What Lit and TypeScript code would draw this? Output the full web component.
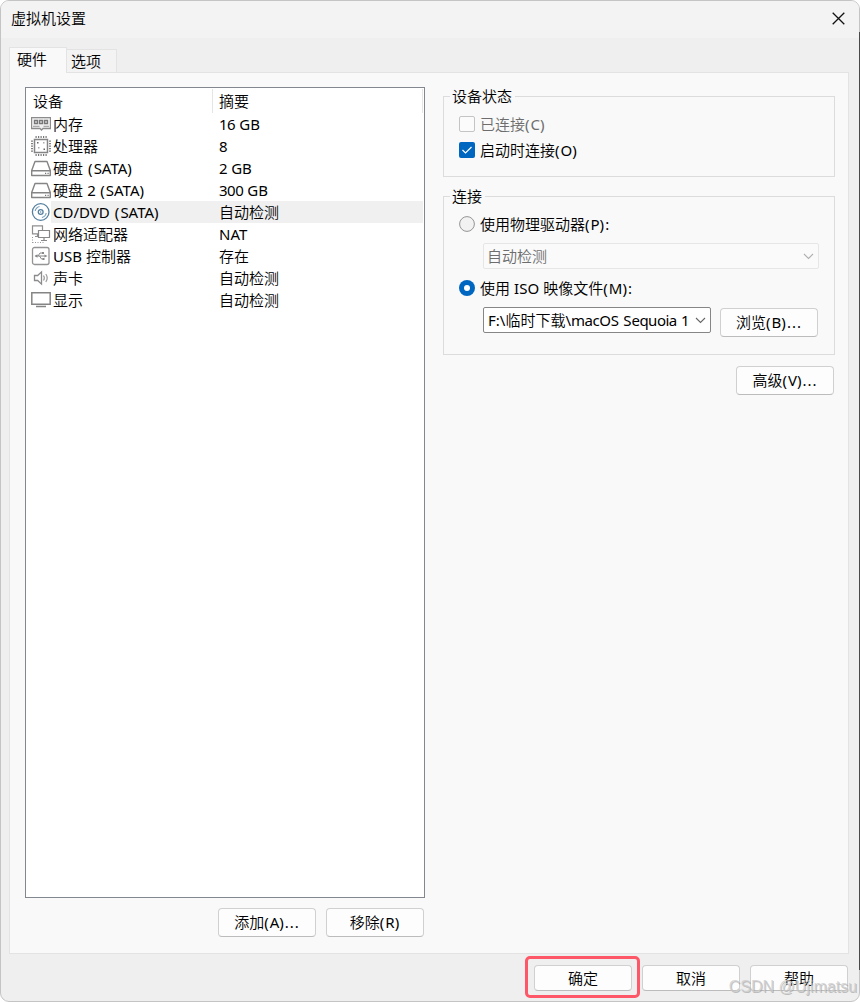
import { LitElement, html, css, svg } from "lit";
import { customElement, property } from "lit/decorators.js";

const ICONS: Record<string, unknown> = {
  memory: svg`<path d="M.5 3.700H19.500V14.500H12L10.500 16 9 14.500H.5z" stroke="#8c8c8c" fill="#f0f0f0" stroke-width="1.300"/><path d="M3.500 6.500h3v3h-3zM8.500 6.500h3v3h-3zM13.500 6.500h3v3h-3z" stroke="#777" fill="#ddd" stroke-width="1.300"/><path d="M2 12.300h6.500M12.500 12.300H18" stroke="#999"/>`,
  cpu: svg`<path d="M3.500 3.500h13v13h-13z" stroke="#858585" fill="#fff" stroke-width="1.500"/><path d="M4.500 1h12M4.500 19h12" stroke="#777" stroke-width="2" stroke-dasharray="1.200 1.300"/><path d="M1 4.500v12M19 4.500v12" stroke="#808080" stroke-width="2" stroke-dasharray="1.200 1.300"/><path d="M6 6h1.500v1.500H6zM12.500 12.500H14V14h-1.500z" fill="#666"/><path d="M7 11h1.500v1.500H7zM12 6h1.500v1.500H12z" fill="#aaa"/>`,
  disk: svg`<path d="M4 3.500h12L19.300 12.500v5H.7v-5zM.7 12.800h18.600" stroke="#858585" fill="#fff" stroke-width="1.400" stroke-linejoin="round"/><path d="M14 15.300h1.200M16.500 15.300h1.200" stroke="#777" stroke-width="1.200"/>`,
  cd: svg`<circle cx="9.700" cy="10" r="8.300" stroke="#55809f" fill="#fff" stroke-width="1.300"/><circle cx="9.700" cy="10" r="2.400" stroke="#55809f" fill="#fff" stroke-width="1.300"/><circle cx="9.700" cy="10" r=".7" fill="#55809f"/><path d="M4.200 9A5.800 5.800 0 0 1 8.500 4.500M15.200 11A5.800 5.800 0 0 1 10.900 15.500" stroke="#78a0bd" stroke-width="1.200" fill="none"/>`,
  net: svg`<path d="M1.500 1.800h10v8h-10zM6.500 10v2.500M4 12.500h4" stroke="#8f8f8f" fill="#fff" stroke-width="1.200"/><path d="M7.500 6.500h11v7h-11zM13 14v2.500M10 16.500h6" stroke="#888" fill="#fff" stroke-width="1.200"/><path d="M1.500 13v6M1.500 18.500H13" stroke="#999" stroke-dasharray="1 1.500" fill="none"/>`,
  usb: svg`<rect x="1.500" y="1.500" width="16.500" height="17" rx="2" stroke="#949494" fill="#fff" stroke-width="1.300"/><path d="M4.500 10h10M7 10l2-3h2.500M8.500 10l2 3h2" stroke="#888" fill="none"/><path d="M3.500 10l3-1.800v3.600zM13.500 8.500l3 1.500-3 1.500zM11 6h2v2h-2zM11.500 12H13.500v2h-2z" fill="#888"/>`,
  sound: svg`<path d="M3.500 7.500h3.200l3.800-3.600v12.200L6.700 12.500H3.500z" stroke="#8b8b8b" fill="#fff" stroke-width="1.300"/><path d="M12.500 7.500q1.700 2.500 0 5M14.800 6q2.800 4 0 8" stroke="#999" fill="none" stroke-width="1.200"/>`,
  display: svg`<path d="M.8 2.800h18.400v11.400H.8z" stroke="#858585" fill="#fff" stroke-width="1.500"/><path d="M5 16.500h10" stroke="#858585" stroke-width="1.500"/>`,
};

const ROWS = [
  { icon: "memory", name: "内存", value: "16 GB" },
  { icon: "cpu", name: "处理器", value: "8" },
  { icon: "disk", name: "硬盘 (SATA)", value: "2 GB" },
  { icon: "disk", name: "硬盘 2 (SATA)", value: "300 GB" },
  { icon: "cd", name: "CD/DVD (SATA)", value: "自动检测", selected: true },
  { icon: "net", name: "网络适配器", value: "NAT" },
  { icon: "usb", name: "USB 控制器", value: "存在" },
  { icon: "sound", name: "声卡", value: "自动检测" },
  { icon: "display", name: "显示", value: "自动检测" },
];

/** Splits a label so that parentheses, small letters and other Latin runs carry their own spacing. */
const label = (text: string) =>
  (text.match(/ ?[()]|\.+|[a-z0-9]+|[\x20-\x27\x2a-\x2d\x2f\x3a-\x60]+?(?= \()|[\x20-\x27\x2a-\x2d\x2f\x3a-\x60]+|[^\x20-\x7e]+/g) ?? []).map(
    (part) => {
      if (/^( ?[()]|\.)/.test(part)) return html`<span class="latin paren">${part}</span>`;
      if (/^[a-z0-9]/.test(part)) return html`<span class="latin narrow">${part}</span>`;
      if (/^[\x20-\x7e]/.test(part)) return html`<span class="latin">${part}</span>`;
      return part;
    }
  );

const textStyles = css`
  .latin {
    font-family: "Noto Sans", sans-serif;
    font-weight: 400;
    font-size: 15px;
    line-height: 1;
    word-spacing: 0.2px;
    white-space: pre;
  }
  .paren {
    letter-spacing: 1px;
  }
  .narrow {
    letter-spacing: -0.5px;
  }
`;

@customElement("push-button")
class PushButton extends LitElement {
  @property() text = "";
  static styles = [
    textStyles,
    css`
      :host {
        display: flex;
        box-sizing: border-box;
        width: 98px;
        height: 29px;
        border: 1px solid #d0d0d0;
        border-bottom-color: #bcbcbc;
        border-radius: 4px;
        background: #fdfdfd;
        align-items: center;
        justify-content: center;
        white-space: nowrap;
        line-height: 20px;
      }
      .caption {
        margin-bottom: 1px;
      }
    `,
  ];
  render() {
    return html`<span class="caption">${label(this.text)}</span>`;
  }
}

@customElement("device-list")
class DeviceList extends LitElement {
  static styles = [
    textStyles,
    css`
      :host {
        display: block;
        box-sizing: border-box;
        width: 400px;
        height: 811px;
        border: 1px solid #828790;
        background: #fff;
      }
      .head {
        display: flex;
        height: 24px;
        margin: 1px 1px 0 0;
        line-height: 23px;
      }
      .head div {
        box-sizing: border-box;
        border-right: 1px solid #e5e5e5;
      }
      .c1 {
        width: 187px;
        padding-left: 7px;
      }
      .c2 {
        width: 210px;
        padding-left: 6px;
      }
      .row {
        display: flex;
        height: 22px;
        line-height: 21px;
        padding-left: 5px;
        margin-right: 1px;
        white-space: nowrap;
      }
      .row svg {
        width: 20px;
        height: 20px;
        margin-top: 1px;
      }
      .cells {
        display: flex;
        flex: 1;
        padding-left: 2px;
      }
      .selected {
        background: #f0f0f0;
      }
      .name {
        width: 166px;
      }
    `,
  ];
  render() {
    return html`
      <div class="head"><div class="c1">设备</div><div class="c2">摘要</div></div>
      ${ROWS.map(
        (r) => html`<div class="row">
          <svg viewBox="0 0 20 20">${ICONS[r.icon]}</svg>
          <div class="cells ${r.selected ? "selected" : ""}">
            <div class="name">${label(r.name)}</div>
            <div>${label(r.value)}</div>
          </div>
        </div>`
      )}
    `;
  }
}

@customElement("app-root")
class AppRoot extends LitElement {
  static styles = [
    textStyles,
    css`
      :host {
        display: block;
        width: 860px;
        height: 1002px;
        background: #fff;
        font: 350 15px "Noto Sans CJK SC", sans-serif;
        color: #000;
        position: relative;
        overflow: hidden;
      }
      .backdrop {
        position: absolute;
        right: 0;
        top: 32px;
        width: 1px;
        height: 938px;
        background: #4a4a4a;
      }
      .window {
        box-sizing: border-box;
        height: 1002px;
        border: 1px solid #c4c4c4;
        border-radius: 9px;
        background: #efefef;
        overflow: hidden;
      }
      .title {
        display: flex;
        align-items: center;
        justify-content: space-between;
        height: 37px;
        padding: 0 14px 0 10px;
        background: #f3f3f3;
      }
      .title span {
        line-height: 20px;
        margin-bottom: 3px;
      }
      .title svg {
        width: 13px;
        height: 13px;
        margin-bottom: 2px;
      }
      .tabs {
        display: flex;
        align-items: flex-end;
        height: 25px;
        padding: 9px 0 0 8px;
      }
      .tab {
        box-sizing: border-box;
        width: 50px;
        height: 23px;
        border: 1px solid #e3e3e3;
        border-left: 0;
        border-bottom: 0;
        background: #f3f3f3;
        padding-left: 4px;
        line-height: 22px;
      }
      .tab.active {
        width: 58px;
        height: 26px;
        margin-bottom: -1px;
        border-left: 1px solid #e3e3e3;
        background: #f9f9f9;
        padding-left: 7px;
        line-height: 21px;
        z-index: 1;
      }
      .page {
        display: flex;
        box-sizing: border-box;
        width: 840px;
        height: 882px;
        margin-left: 8px;
        border: 1px solid #e3e3e3;
        background: #f9f9f9;
        padding: 14px 0 0 15px;
      }
      .left {
        width: 400px;
        flex: none;
      }
      .actions {
        display: flex;
        justify-content: flex-end;
        gap: 10px;
        margin: 10px 1px 0 0;
      }
      .right {
        width: 392px;
        flex: none;
        margin-left: 18px;
      }
      .group {
        box-sizing: border-box;
        width: 392px;
        border: 1px solid #dcdcdc;
        padding: 0 15px;
      }
      .status {
        height: 81px;
        margin-top: 9px;
      }
      .connection {
        height: 159px;
        margin-top: 19px;
      }
      .legend {
        width: max-content;
        height: 20px;
        line-height: 20px;
        margin: -11px 0 0 -9px;
        padding: 0 3px 0 2px;
        background: #f9f9f9;
      }
      .option {
        display: flex;
        align-items: center;
        gap: 5px;
        height: 26px;
        line-height: 20px;
        white-space: nowrap;
      }
      .status .option:nth-child(2) {
        margin-top: 5px;
      }
      .connection .option:nth-child(2) {
        margin-top: 5px;
      }
      .option svg {
        width: 16px;
        height: 16px;
      }
      .muted {
        color: #6d6d6d;
      }
      .combo {
        box-sizing: border-box;
        display: flex;
        align-items: center;
        justify-content: space-between;
        height: 26px;
        border: 1px solid #868686;
        border-radius: 2px;
        background: #fff;
        padding: 0 4px;
        line-height: 20px;
        white-space: nowrap;
      }
      .combo > span {
        margin-bottom: 1px;
      }
      .combo svg {
        width: 11px;
        height: 7px;
        flex: none;
      }
      .combo.off {
        width: 336px;
        margin: 6px 0 6px 24px;
        padding-left: 3px;
        border-color: #e6e6e6;
        background: #fafafa;
        color: #6d6d6d;
      }
      .combo.on {
        width: 228px;
      }
      .file {
        display: flex;
        gap: 9px;
        margin: 6px 0 0 24px;
      }
      .file push-button {
        margin-top: 1px;
      }
      .advanced {
        margin: 11px 1px 0 auto;
      }
      .footer {
        display: flex;
        justify-content: flex-end;
        gap: 10px;
        padding: 11px 11px 0 0;
      }
      .footer push-button {
        height: 26px;
      }
      .highlight {
        position: absolute;
        box-sizing: border-box;
        left: 525px;
        top: 956px;
        width: 115px;
        height: 42px;
        border: 3px solid #fd5768;
        border-radius: 5px;
      }
      .watermark {
        position: absolute;
        right: 3px;
        top: 977px;
        font: 16px/20px "Liberation Sans", sans-serif;
        color: rgba(205, 205, 205, 0.8);
        text-shadow: 1px 1px 0 rgba(140, 140, 140, 0.5);
      }
    `,
  ];

  chevron(color: string) {
    return html`<svg viewBox="0 0 11 7"><path d="M1 1l4.500 4.500L10 1" fill="none" stroke=${color} stroke-width="1.100"/></svg>`;
  }

  render() {
    return html`
      <div class="window">
        <div class="title">
          <span>虚拟机设置</span>
          <svg viewBox="0 0 13 13"><path d="M.7.700l11.600 11.600M12.300.700L.7 12.300" stroke="#111" stroke-width="1.300"/></svg>
        </div>
        <div class="tabs">
          <div class="tab active">硬件</div>
          <div class="tab">选项</div>
        </div>
        <div class="page">
          <div class="left">
            <device-list></device-list>
            <div class="actions">
              <push-button text="添加(A)..."></push-button>
              <push-button text="移除(R)"></push-button>
            </div>
          </div>
          <div class="right">
            <div class="group status">
              <div class="legend">设备状态</div>
              <div class="option muted">
                <svg viewBox="0 0 16 16"><rect x=".5" y=".5" width="15" height="15" rx="1.500" fill="#fbfbfb" stroke="#c4c4c4"/></svg>
                <span>${label("已连接(C)")}</span>
              </div>
              <div class="option">
                <svg viewBox="0 0 16 16"><rect width="16" height="16" rx="2" fill="#0067c0"/><path d="M3.500 8l3 3 6-6" fill="none" stroke="#fff" stroke-width="1.200"/></svg>
                <span>${label("启动时连接(O)")}</span>
              </div>
            </div>
            <div class="group connection">
              <div class="legend">连接</div>
              <div class="option">
                <svg viewBox="0 0 16 16"><circle cx="8" cy="8" r="7.400" fill="#f2f2f2" stroke="#949494"/></svg>
                <span>${label("使用物理驱动器(P):")}</span>
              </div>
              <div class="combo off"><span>自动检测</span>${this.chevron("#b0b0b0")}</div>
              <div class="option">
                <svg viewBox="0 0 16 16"><circle cx="8" cy="8" r="8" fill="#0067c0"/><circle cx="8" cy="8" r="3" fill="#fff"/></svg>
                <span>${label("使用 ISO 映像文件(M):")}</span>
              </div>
              <div class="file">
                <div class="combo on"><span>${label("F:\\临时下载\\macOS Sequoia 1")}</span>${this.chevron("#666")}</div>
                <push-button text="浏览(B)..."></push-button>
              </div>
            </div>
            <push-button class="advanced" text="高级(V)..."></push-button>
          </div>
        </div>
        <div class="footer">
          <push-button text="确定"></push-button>
          <push-button text="取消"></push-button>
          <push-button text="帮助"></push-button>
        </div>
      </div>
      <div class="backdrop"></div>
      <div class="highlight"></div>
      <div class="watermark">CSDN @Ujimatsu</div>
    `;
  }
}
